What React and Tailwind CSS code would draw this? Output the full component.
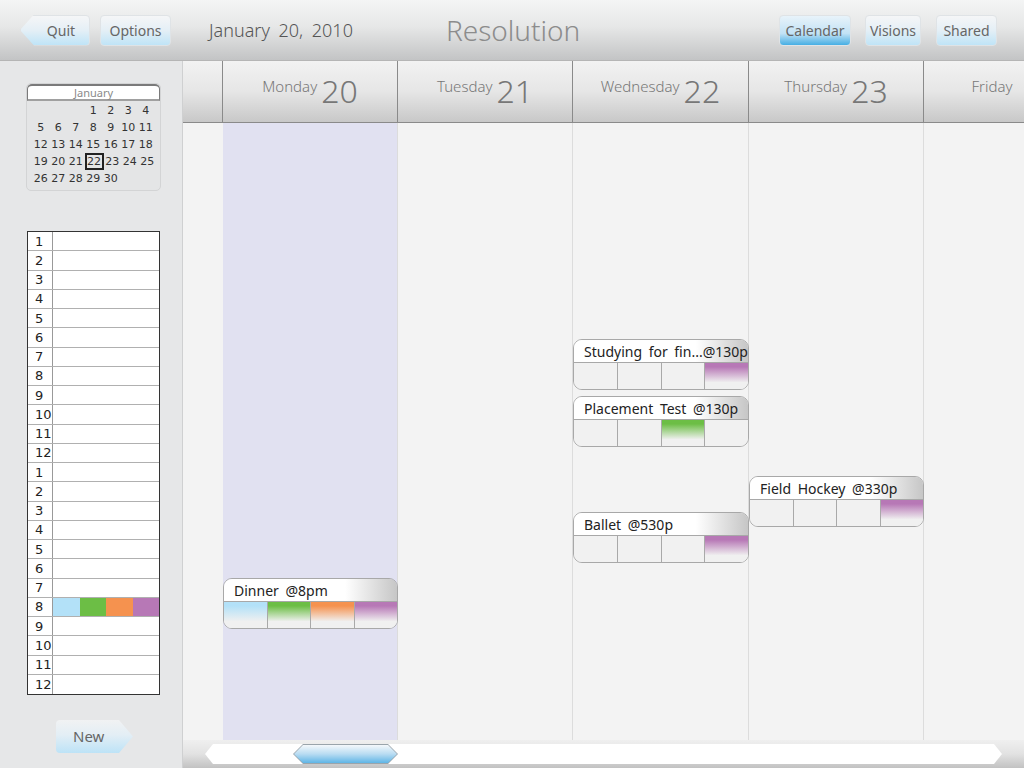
import React from "react";

const COLORS = {
  blue: "#b3e1f8",
  green: "#6cbe45",
  orange: "#f5924f",
  purple: "#b778b6",
};

function Cell({ color, last }) {
  const style = color
    ? { backgroundImage: `linear-gradient(to bottom, ${COLORS[color]} 0%, ${COLORS[color]} 15%, #f0f0f0 75%)` }
    : undefined;
  return (
    <div
      className={`flex-1 h-full bg-[#f1f1f1] ${last ? "" : "border-r border-[#a9a9a9]"}`}
      style={style}
    />
  );
}

function Event({ title, top, cells }) {
  return (
    <div
      className="absolute left-0 right-[-1px] h-[51px] rounded-[9px] border border-[#a8a8a8] overflow-hidden flex flex-col"
      style={{ top }}
    >
      <div className="h-[23px] shrink-0 border-b border-[#a8a8a8] bg-[linear-gradient(to_right,#ffffff_70%,#c6c6c6)] flex items-center pl-[10px] text-[14px] text-[#222] [word-spacing:3px] whitespace-nowrap">
        {title}
      </div>
      <div className="flex-1 flex">
        {cells.map((c, i) => (
          <Cell key={i} color={c} last={i === cells.length - 1} />
        ))}
      </div>
    </div>
  );
}

function TopButton({ label, active, shape }) {
  const clip =
    shape === "left"
      ? "[clip-path:polygon(14px_0,100%_0,100%_100%,14px_100%,0_50%)] pl-[12px]"
      : "";
  return (
    <div
      className={`h-[31px] flex items-center justify-center text-[14px] text-[#666] rounded-[4px] border border-[#dfe3e6] ${clip} ${
        active
          ? "bg-[linear-gradient(to_bottom,#e8f3fa_0%,#c2e2f5_60%,#46aee4_100%)] text-[#555]"
          : "bg-[linear-gradient(to_bottom,#f5f6f7_0%,#e4eff6_50%,#bfe4f7_100%)]"
      }`}
      style={{ fontFamily: '"Noto Sans", sans-serif' }}
    >
      {label}
    </div>
  );
}

const calRows = [
  ["", "", "", "1", "2", "3", "4"],
  ["5", "6", "7", "8", "9", "10", "11"],
  ["12", "13", "14", "15", "16", "17", "18"],
  ["19", "20", "21", "22", "23", "24", "25"],
  ["26", "27", "28", "29", "30", "", ""],
];

const hours = [1, 2, 3, 4, 5, 6, 7, 8, 9, 10, 11, 12, 1, 2, 3, 4, 5, 6, 7, 8, 9, 10, 11, 12];

const days = [
  { name: "Monday", num: "20", w: "w-[175px]" },
  { name: "Tuesday", num: "21", w: "w-[175px]" },
  { name: "Wednesday", num: "22", w: "w-[176px]" },
  { name: "Thursday", num: "23", w: "w-[175px]" },
  { name: "Friday", num: "", w: "w-[140px]" },
];

export default function App() {
  return (
    <div
      className="w-[1024px] h-[768px] overflow-hidden flex flex-col bg-[#e6e7e8]"
      style={{ fontFamily: '"DejaVu Sans", "Noto Sans", sans-serif' }}
    >
      {/* Top bar */}
      <div className="h-[61px] shrink-0 bg-[linear-gradient(to_bottom,#f4f5f5_0%,#e6e7e7_45%,#c3c4c5_100%)] border-b border-[#b5b5b5] flex items-center relative">
        <div className="ml-[20px] w-[70px]">
          <TopButton label="Quit" shape="left" />
        </div>
        <div className="ml-[10px] w-[71px]">
          <TopButton label="Options" />
        </div>
        <div className="ml-[38px] text-[18px] text-[#555] [word-spacing:4px] font-light" style={{ fontFamily: '"Noto Sans", sans-serif' }}>
          January 20, 2010
        </div>
        <div className="ml-[93px] text-[28px] text-[#8c8c8c] font-light" style={{ fontFamily: '"Noto Sans", sans-serif' }}>
          Resolution
        </div>
        <div className="ml-auto flex items-center mr-[27px]">
          <div className="w-[72px]">
            <TopButton label="Calendar" active />
          </div>
          <div className="w-[56px] ml-[14px]">
            <TopButton label="Visions" />
          </div>
          <div className="w-[61px] ml-[15px]">
            <TopButton label="Shared" />
          </div>
        </div>
      </div>

      <div className="flex flex-1 min-h-0">
        {/* Sidebar */}
        <div className="w-[183px] shrink-0 bg-[#e6e7e8] border-r border-[#cfd0d1] flex flex-col">
          {/* Mini calendar */}
          <div className="mt-[22px] ml-[26px] w-[135px] h-[108px] rounded-[5px] border border-[#d3d4d5] bg-[#e4e5e6] overflow-hidden">
            <div className="h-[17px] bg-white border-t-2 border-x border-b-2 border-[#7a7a7a] border-b-[#a0a0a0] rounded-t-[5px] flex items-center justify-center text-[11px] text-[#8a8a8a] leading-none" style={{ fontFamily: '"Noto Sans", sans-serif' }}>
              January
            </div>
            <div className="pl-[5px] pt-[1px]">
              {calRows.map((row, ri) => (
                <div key={ri} className="flex h-[17px] items-center">
                  {row.map((d, ci) => (
                    <div
                      key={ci}
                      className={`w-[17.5px] h-[17px] flex items-center justify-center text-[11px] text-[#333] leading-none ${
                        d === "22" ? "border-2 border-[#222] w-[19px]" : ""
                      }`}
                    >
                      {d}
                    </div>
                  ))}
                </div>
              ))}
            </div>
          </div>

          {/* Hours table */}
          <div className="mt-[40px] ml-[27px] w-[133px] border border-[#333] bg-white">
            {hours.map((h, i) => (
              <div
                key={i}
                className={`h-[19.25px] flex ${i < hours.length - 1 ? "border-b border-[#b0b0b0]" : ""}`}
              >
                <div className="w-[25px] shrink-0 border-r border-[#999] text-[13px] text-[#222] pl-[7px] flex items-center leading-none">
                  {h}
                </div>
                {i === 19 ? (
                  <div className="flex-1 flex">
                    <div className="flex-1 bg-[#b3e1f8]" />
                    <div className="flex-1 bg-[#6cbe45]" />
                    <div className="flex-1 bg-[#f5924f]" />
                    <div className="flex-1 bg-[#b778b6]" />
                  </div>
                ) : (
                  <div className="flex-1" />
                )}
              </div>
            ))}
          </div>

          {/* New button */}
          <div className="mt-[25px] ml-[56px] w-[77px] h-[33px] flex items-center pl-[17px] text-[15px] text-[#666] bg-[linear-gradient(to_bottom,#f1f2f3_0%,#e3eef5_45%,#bde3f7_100%)] rounded-l-[4px] [clip-path:polygon(0_0,calc(100%-14px)_0,100%_50%,calc(100%-14px)_100%,0_100%)]" style={{ fontFamily: '"Noto Sans", sans-serif' }}>
            New
          </div>
        </div>

        {/* Main */}
        <div className="flex-1 min-w-0 flex flex-col overflow-hidden">
          {/* Header */}
          <div className="h-[62px] shrink-0 flex bg-[linear-gradient(to_bottom,#f2f2f2_0%,#e6e6e6_50%,#c8c8c8_100%)] border-b border-[#8a8a8a]">
            <div className="w-[40px] shrink-0 border-r border-[#8a8a8a]" />
            {days.map((d, i) => (
              <div
                key={i}
                className={`${d.w} shrink-0 flex items-end justify-center pb-[14px] text-[#777] ${
                  i < days.length - 1 ? "border-r border-[#8a8a8a]" : ""
                }`}
                style={{ fontFamily: '"Noto Sans", sans-serif' }}
              >
                <span className="text-[15px] font-light mr-[4px] mb-[11px]">{d.name}</span>
                {d.num ? (
                  <span className="text-[32px] leading-[34px] font-light text-[#777]">{d.num}</span>
                ) : (
                  <span className="h-[34px] w-0" />
                )}
              </div>
            ))}
          </div>

          {/* Body */}
          <div className="flex-1 flex bg-[#f3f3f3]" style={{ fontFamily: '"Noto Sans", sans-serif' }}>
            <div className="w-[40px] shrink-0" />
            {/* Monday */}
            <div className="w-[175px] shrink-0 relative bg-[#e1e1f1] border-r border-[#dcdcdc]">
              <Event title="Dinner @8pm" top={455} cells={["blue", "green", "orange", "purple"]} />
            </div>
            {/* Tuesday */}
            <div className="w-[175px] shrink-0 relative border-r border-[#dcdcdc]" />
            {/* Wednesday */}
            <div className="w-[176px] shrink-0 relative border-r border-[#dcdcdc]">
              <Event title="Studying for fin...@130p" top={216} cells={[null, null, null, "purple"]} />
              <Event title="Placement Test @130p" top={273} cells={[null, null, "green", null]} />
              <Event title="Ballet @530p" top={389} cells={[null, null, null, "purple"]} />
            </div>
            {/* Thursday */}
            <div className="w-[175px] shrink-0 relative border-r border-[#dcdcdc]">
              <Event title="Field Hockey @330p" top={353} cells={[null, null, null, "purple"]} />
            </div>
            <div className="w-[140px] shrink-0" />
          </div>

          {/* Scrollbar */}
          <div className="h-[28px] shrink-0 bg-[linear-gradient(to_bottom,#efefef_0%,#e2e2e2_50%,#c2c2c2_100%)] relative">
            <div className="absolute left-[22px] right-[22px] top-[4px] h-[20px] bg-white [clip-path:polygon(8px_0,calc(100%-8px)_0,100%_50%,calc(100%-8px)_100%,8px_100%,0_50%)]" />
            <div className="absolute left-[110px] w-[105px] top-[4px] h-[20px] bg-[#9aa4ab] [clip-path:polygon(10px_0,calc(100%-10px)_0,100%_50%,calc(100%-10px)_100%,10px_100%,0_50%)]">
              <div className="absolute inset-[1px] bg-[linear-gradient(to_bottom,#f4f8fb_0%,#b9dcf2_50%,#5fb5e6_100%)] [clip-path:polygon(9px_0,calc(100%-9px)_0,100%_50%,calc(100%-9px)_100%,9px_100%,0_50%)]" />
            </div>
          </div>
        </div>
      </div>
    </div>
  );
}
